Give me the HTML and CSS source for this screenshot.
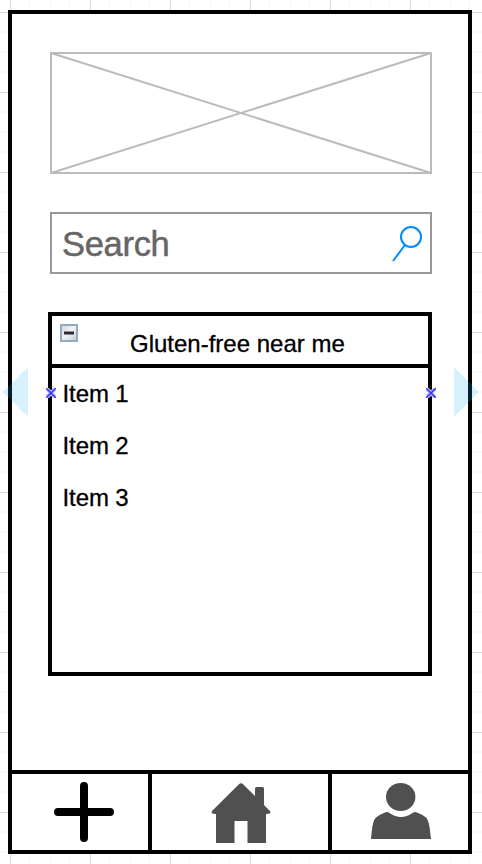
FILE: index.html
```html
<!DOCTYPE html>
<html lang="en">
<head>
<meta charset="utf-8">
<title>Gluten-free near me</title>
<link rel="stylesheet" href="styles.css">
</head>
<body>
<main class="phone">
  <svg class="placeholder" viewBox="0 0 382 122">
    <path d="M1 1H381V121H1ZM1 1L381 121M1 121L381 1"/>
  </svg>
  <div class="search">
    <span>Search</span>
    <svg class="lens" width="32" height="38" viewBox="0 0 32 38"><circle cx="20" cy="12" r="10"/><path d="M14 20L2 36"/></svg>
  </div>
  <section class="list">
    <header class="list-head">
      <svg class="collapse" width="18" height="18" viewBox="0 0 18 18">
        <defs><linearGradient id="g" x1="0" y1="0" x2="1" y2="1"><stop offset="0" stop-color="#c3d2df"/><stop offset=".45" stop-color="#f3f3f3"/><stop offset="1" stop-color="#bccddc"/></linearGradient></defs>
        <rect x="1" y="1" width="16" height="16" fill="url(#g)" stroke="#95a9bc" stroke-width="2"/>
        <rect x="4" y="7.5" width="10" height="3" rx=".5" fill="#2b2b2b"/>
      </svg>
      <span>Gluten-free near me</span>
    </header>
    <ul class="items">
      <li>Item 1</li>
      <li>Item 2</li>
      <li>Item 3</li>
    </ul>
    <svg class="pin pin-left" width="10" height="10" viewBox="0 0 10 10"><path class="halo" d="M1 1L9 9M9 1L1 9"/><path d="M0 0L10 10M10 0L0 10"/></svg>
    <svg class="pin pin-right" width="10" height="10" viewBox="0 0 10 10"><path class="halo" d="M1 1L9 9M9 1L1 9"/><path d="M0 0L10 10M10 0L0 10"/></svg>
  </section>
  <nav class="tabs">
    <a class="tab"><svg class="plus" width="60" height="60" viewBox="0 0 60 60"><path d="M30 4V56M4 30H56"/></svg></a>
    <a class="tab"><svg class="home" width="60" height="60" viewBox="0 0 60 60"><path d="M27.900 1.200Q30-.7 32.100 1.200L44 13V5.500Q44 4 45.500 4H51.500Q53 4 53 5.500V22L58.500 27.500Q60 29 59.200 30Q58.500 31 55 31V60H36.500V38H23.500V60H5V31Q1.500 31 .8 30Q.2 29 1.500 27.500Z"/></svg></a>
    <a class="tab"><svg class="user" width="60" height="57" viewBox="0 0 60 57"><ellipse cx="29.700" cy="14" rx="14.700" ry="14"/><path d="M0 56C1 47 1.500 37.500 5 34.500Q9 31.200 14 29.400Q16.500 28.500 18.500 30Q30 37.800 41.500 30Q43.500 28.500 46 29.400Q51 31.200 55 34.500C58.500 38 59 48 60 56Z"/></svg></a>
  </nav>
</main>
<svg class="arrow arrow-left" width="25" height="50" viewBox="0 0 25 50"><path d="M25 0V50L0 25Z"/></svg>
<svg class="arrow arrow-right" width="25" height="50" viewBox="0 0 25 50"><path d="M0 0V50L25 25Z"/></svg>
</body>
</html>
```

FILE: styles.css
```css
* { box-sizing: border-box; }

body {
  margin: 0;
  height: 864px;
  padding: 10px 0 0 8px;
  overflow: hidden;
  position: relative;
  font-family: Helvetica, "Liberation Sans", Arial, sans-serif;
  color: #000;
  background-color: #fff;
  background-image:
    linear-gradient(90deg, #ddd 1px, transparent 1px),
    linear-gradient(#ddd 1px, transparent 1px),
    linear-gradient(90deg, #fafafa 2px, transparent 2px),
    linear-gradient(#fafafa 2px, transparent 2px);
  background-size: 80px 80px, 80px 80px, 20px 20px, 20px 20px;
  background-position: 10px 12px, 10px 12px, 9px 11px, 9px 11px;
}

svg { display: block; flex: none; }

.phone {
  width: 464px;
  height: 844px;
  border: 4px solid #000;
  background: #fff;
  padding-top: 38px;
  display: flex;
  flex-direction: column;
}

.placeholder {
  width: 382px;
  height: 122px;
  margin-left: 38px;
  fill: none;
  stroke: #bbb;
  stroke-width: 2;
}

.search {
  width: 382px;
  height: 62px;
  margin: 38px 0 0 38px;
  padding: 2px 7px 0 10px;
  border: 2px solid #999;
  display: flex;
  align-items: center;
  justify-content: space-between;
  font-size: 34.500px;
  letter-spacing: -.3px;
  color: #666;
  -webkit-text-stroke: .5px #666;
}

.lens { fill: none; stroke: #008cff; stroke-width: 2; }

.list {
  position: relative;
  width: 384px;
  height: 364px;
  margin: 38px 0 0 36px;
  border: 4px solid #000;
  font-size: 24px;
  -webkit-text-stroke: .3px #000;
}

.list-head {
  height: 52px;
  padding: 8px 0 0 8px;
  border-bottom: 4px solid #000;
  display: flex;
  line-height: 40px;
}

.list-head span { margin-left: 52px; }

.items {
  list-style: none;
  margin: 0;
  padding: 0 0 0 10.500px;
  line-height: 52px;
  letter-spacing: -.1px;
}

.pin {
  position: absolute;
  top: 72px;
  fill: none;
  stroke: #33f;
  stroke-width: 1.500;
}

.pin .halo { stroke: #bbf; stroke-width: 4; }
.pin-left { left: -6px; }
.pin-right { right: -8px; }

.tabs {
  margin-top: auto;
  height: 80px;
  border-top: 4px solid #000;
  display: grid;
  grid-template-columns: 140px 180px 1fr;
}

.tab { padding-top: 8px; }
.tab:not(:last-child) { border-right: 4px solid #000; }

.plus {
  margin-left: 42px;
  stroke: #000;
  stroke-width: 8;
  stroke-linecap: round;
}

.home { margin: 1px 0 0 59px; fill: #505050; }
.user { margin: 1px 0 0 39px; fill: #505050; }

.arrow { position: absolute; top: 367px; fill: #29b6f2; opacity: .18; }
.arrow-left { left: 3px; }
.arrow-right { left: 454px; }
```
